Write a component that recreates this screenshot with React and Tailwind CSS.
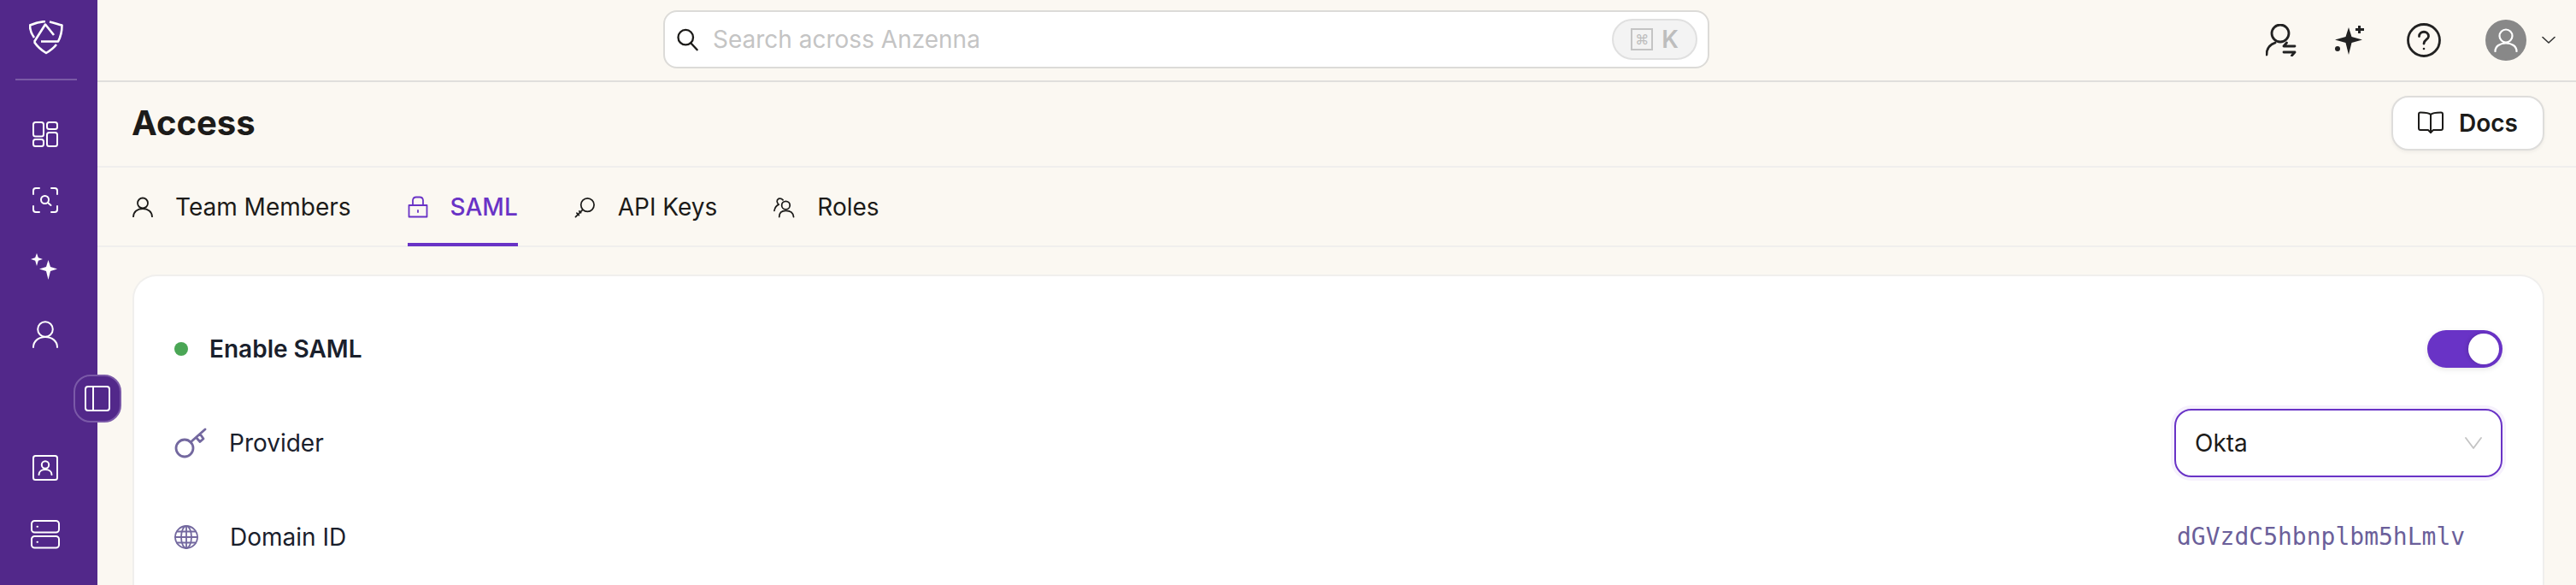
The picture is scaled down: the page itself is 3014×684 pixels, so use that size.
import React from 'react';

const Icon = ({ className, children, sw = 2, vb = '0 0 24 24' }) => (
  <svg viewBox={vb} fill="none" stroke="currentColor" strokeWidth={sw} strokeLinecap="round" strokeLinejoin="round" className={className}>
    {children}
  </svg>
);

const Logo = ({ className }) => (
  <svg viewBox="0 0 40 40" fill="none" stroke="currentColor" strokeWidth="2.6" strokeLinejoin="round" className={className}>
    <path d="M6 20 C3 16 1 11 1 5.500 C7 3 13 1.500 19 1" />
    <path d="M24 1.500 C29 2.500 33 4 38.500 5.500 C38.500 13 37 19 34 24.500 H14" />
    <path d="M6 25 L19 4.500 L29 17" />
    <path d="M6 25 C10 31 15 35 20 38 C25 35 29 32 32 28" />
  </svg>
);

const SparklesIcon = ({ className }) => (
  <svg viewBox="0 0 32 32" fill="currentColor" className={className}>
    <path d="M8 0 L9.800 5.200 L15 7 L9.800 8.800 L8 15 L6.200 8.800 L1 7 L6.200 5.200 Z" />
    <path d="M21.500 8 L24 16 L32 18.500 L24 21 L21.500 31 L19 21 L11 18.500 L19 16 Z" />
  </svg>
);

const navTop = [
  <Icon key="grid" className="w-[30px] h-[30px]" vb="0 0 30 30">
    <rect x="1" y="1" width="12" height="16.500" rx="2.500" />
    <rect x="17" y="1" width="12" height="8" rx="2.500" />
    <rect x="1" y="21" width="12" height="8" rx="2.500" />
    <rect x="17" y="13" width="12" height="16" rx="2.500" />
  </Icon>,
  <Icon key="scan" className="w-[30px] h-[30px]" vb="0 0 30 30">
    <path d="M1 8 V4 A3 3 0 0 1 4 1 H8" />
    <path d="M22 1 H26 A3 3 0 0 1 29 4 V8" />
    <path d="M29 22 V26 A3 3 0 0 1 26 29 H22" />
    <path d="M8 29 H4 A3 3 0 0 1 1 26 V22" />
    <circle cx="14.500" cy="14.500" r="4.500" />
    <path d="M18 18 L21.500 21" />
  </Icon>,
  <SparklesIcon key="spark" className="w-[32px] h-[32px] -ml-[4px]" />,
  <Icon key="user" className="w-[30px] h-[32px]" vb="0 0 30 32">
    <circle cx="15" cy="10" r="8.800" />
    <path d="M1 31 C1 24 7 19 15 19 C23 19 29 24 29 31" />
  </Icon>,
];

const tabs = [
  {
    label: 'Team Members',
    icon: (
      <Icon className="w-[24px] h-[24px]" sw={1.8}>
        <circle cx="12" cy="7.500" r="6" />
        <path d="M1 23.500 C1 17.500 6 14 12 14 C18 14 23 17.500 23 23.500" />
      </Icon>
    ),
  },
  {
    label: 'SAML',
    active: true,
    icon: (
      <Icon className="w-[24px] h-[26px]" sw={1.8} vb="0 0 24 26">
        <rect x="1.500" y="11" width="21" height="13.500" />
        <path d="M6 11 V5 A4 4 0 0 1 10 1.500 H14 A4 4 0 0 1 18 5 V11" />
        <path d="M12 17 V19" />
      </Icon>
    ),
  },
  {
    label: 'API Keys',
    icon: (
      <Icon className="w-[25px] h-[25px]" sw={1.8} vb="0 0 26 26">
        <circle cx="16" cy="10" r="8" />
        <path d="M10 16 L1.500 24.500" />
        <path d="M3 20 L5.500 22.500 M6 17.500 L8 19.500" />
      </Icon>
    ),
  },
  {
    label: 'Roles',
    icon: (
      <Icon className="w-[25px] h-[25px]" sw={1.8} vb="0 0 26 26">
        <circle cx="15" cy="10.500" r="5" />
        <path d="M7 24.500 C7 19.500 10 17 15 17 C20 17 24 19.500 24.500 24.500" />
        <path d="M11.500 4 A5 5 0 0 0 6 2.500 C3.500 4 4 8 6.500 9.500 C3 11 1.500 14 1 17" />
      </Icon>
    ),
  },
];

export default function App() {
  return (
    <div className="flex h-[684px] w-[3014px] overflow-hidden bg-[#fbf8f2] text-[#1c1b19] relative" style={{ fontFamily: 'Inter, sans-serif' }}>
      {/* Sidebar */}
      <aside className="w-[114px] shrink-0 bg-[#52288a] text-white flex flex-col items-center">
        <div className="h-[92px] w-full flex items-start justify-center pt-[24px] pr-[6px]">
          <Logo className="w-[40px] h-[40px]" />
        </div>
        <div className="w-[72px] h-[2px] bg-[#7a5aa6] -ml-[6px]" />
        <nav className="mt-[48px] flex flex-col items-center gap-[47px] -ml-[8px]">
          {navTop}
        </nav>
        <div className="mt-[125px] flex flex-col items-center gap-[46px] -ml-[8px]">
          <Icon className="w-[30px] h-[30px]" vb="0 0 30 30">
            <rect x="1" y="1" width="28" height="28" rx="2.500" />
            <circle cx="15" cy="11.500" r="4.200" />
            <path d="M7.500 23 C7.500 19 11 17 15 17 C19 17 22.500 19 22.500 23" />
          </Icon>
          <Icon className="w-[34px] h-[34px]" vb="0 0 34 34">
            <rect x="1" y="1" width="32" height="13.500" rx="3.500" />
            <rect x="1" y="19" width="32" height="13.500" rx="3.500" />
            <path d="M7.500 7.700 H8 M7.500 25.700 H8" strokeWidth="2" />
          </Icon>
        </div>
      </aside>

      {/* Collapse toggle */}
      <button className="absolute left-[86px] top-[438px] w-[56px] h-[56px] rounded-[20px] bg-[#52288a] border-2 border-[#7b5aa8] text-white flex items-center justify-center">
        <Icon className="w-[30px] h-[30px]" vb="0 0 30 30">
          <rect x="1" y="1" width="28" height="28" rx="3" />
          <path d="M10 1 V29" />
        </Icon>
      </button>

      <main className="flex-1 min-w-0 flex flex-col">
        {/* Top bar */}
        <header className="h-[96px] shrink-0 border-b-2 border-[#e0dfdc] relative flex items-center">
          <div className="ml-[662px] w-[1224px] h-[68px] -mt-[2px] rounded-[16px] border-2 border-[#dcdbd8] bg-white flex items-center pl-[12px] pr-[12px]">
            <Icon className="w-[28px] h-[28px] shrink-0" sw={2}>
              <circle cx="10.500" cy="10" r="7.500" />
              <path d="M16 16 L22 22.500" />
            </Icon>
            <span className="ml-[16px] text-[28px] text-[#c4c4c4]">Search across Anzenna</span>
            <div className="ml-auto w-[100px] h-[48px] rounded-full bg-[#f3f3f3] border-2 border-[#e0e0e0] flex items-center justify-center gap-[10px] text-[#bdbdbd]">
              <span className="w-[26px] h-[26px] border-2 border-[#c4c4c4] flex items-center justify-center text-[16px] leading-none">⌘</span>
              <span className="text-[28px] font-semibold leading-none">K</span>
            </div>
          </div>
          <div className="ml-auto flex items-center mr-[24px]">
            <Icon className="w-[36px] h-[38px] text-[#222]" sw={2.8} vb="0 0 36 38">
              <circle cx="17" cy="11" r="10" />
              <path d="M1 36 C1 29 5 24 11 22" />
              <path d="M21 26 H34 M24.500 22 L21 26 M21 33 H34 M30.500 37 L34 33" />
            </Icon>
            <svg viewBox="0 0 36 36" fill="currentColor" className="ml-[44px] w-[36px] h-[36px] text-[#222]">
              <path d="M17 3 L20.500 14 L33 17.500 L20.500 21 L17 35 L13.500 21 L1 17.500 L13.500 14 Z" />
              <path d="M28 1 H31 V4 H35 V7 H31 V10 H28 V7 H25 V4 H28 Z" />
              <circle cx="4" cy="28" r="3" />
            </svg>
            <Icon className="ml-[49px] w-[40px] h-[40px] text-[#222]" sw={2.8} vb="0 0 40 40">
              <circle cx="20" cy="20" r="18.500" />
              <path d="M14.500 15.500 C14.500 8.500 25.500 8.500 25.500 15.500 C25.500 19 20 19.500 20 24" />
              <circle cx="20" cy="30" r="1.300" fill="currentColor" stroke="none" />
            </Icon>
            <div className="ml-[52px] w-[48px] h-[48px] rounded-full bg-[#888888] flex items-center justify-center text-white">
              <Icon className="w-[28px] h-[28px]" sw={2.2} vb="0 0 28 28">
                <circle cx="14" cy="9" r="7.500" />
                <path d="M1.500 27 C1.500 21 7 17.500 14 17.500 C21 17.500 26.500 21 26.500 27" />
              </Icon>
            </div>
            <Icon className="ml-[18px] w-[16px] h-[10px] text-[#333]" sw={1.6} vb="0 0 16 10">
              <path d="M1 1.500 L8 8 L15 1.500" />
            </Icon>
          </div>
        </header>

        {/* Page title */}
        <div className="h-[100px] shrink-0 border-b-2 border-[#f0efed] flex items-center justify-between pl-[40px] pr-[37px]">
          <h1 className="text-[40px] font-bold -mt-[2px]">Access</h1>
          <button className="w-[179px] h-[64px] -mt-[2px] rounded-[20px] border-2 border-[#dedddb] bg-white shadow-[0_2px_4px_rgba(0,0,0,0.05)] flex items-center justify-center gap-[18px] text-[28px] font-semibold">
            <Icon className="w-[30px] h-[28px]" sw={2} vb="0 0 30 28">
              <path d="M15 4 C13 2 10 1.500 3 1.500 C1.800 1.500 1 2.300 1 3.500 V20 C1 21.300 1.800 22 3 22 H12 L15 25 L18 22 H27 C28.200 22 29 21.300 29 20 V3.500 C29 2.300 28.200 1.500 27 1.500 C20 1.500 17 2 15 4 Z" />
              <path d="M15 4 V25" />
            </Icon>
            Docs
          </button>
        </div>

        {/* Tabs */}
        <div className="h-[93px] shrink-0 border-b-2 border-[#f0efed] flex items-stretch pl-[41px] gap-[66px]">
          {tabs.map((t) => (
            <div key={t.label} className={`flex items-center gap-[26px] h-[92px] border-b-4 pt-[4px] text-[28px] ${t.active ? 'border-[#6933c6] text-[#6933c6] font-medium' : 'border-transparent'}`}>
              {t.icon}
              {t.label}
            </div>
          ))}
        </div>

        {/* SAML card */}
        <section className="mt-[32px] ml-[41px] mr-[37px] flex-1 rounded-t-[28px] border-2 border-b-0 border-[#f0efed] bg-white pl-[47px] pr-[47px] pt-[25px] text-[#1a202c]">
          <div className="h-[120px] flex items-center justify-between">
            <div className="flex items-center gap-[25px]">
              <span className="w-[16px] h-[16px] rounded-full bg-[#4aa655]" />
              <span className="text-[28px] font-semibold">Enable SAML</span>
            </div>
            <div className="w-[88px] h-[44px] rounded-full bg-[#6933c6] flex items-center justify-end pr-[4px] shadow-[0_2px_6px_rgba(0,0,0,0.1)]">
              <span className="w-[36px] h-[36px] rounded-full bg-white shadow-[-2px_0_4px_rgba(0,0,0,0.12)]" />
            </div>
          </div>
          <div className="h-[100px] flex items-center justify-between">
            <div className="flex items-center">
              <Icon className="w-[38px] h-[36px] text-[#73689f]" sw={2.8} vb="0 0 38 36">
                <circle cx="12" cy="24" r="10" />
                <path d="M19 17 L36 2 M25.500 11.500 L30 16.500 L34 13 L30.500 8" />
              </Icon>
              <span className="ml-[26px] text-[28px]">Provider</span>
            </div>
            <div className="w-[384px] h-[80px] rounded-[20px] border-2 border-[#6933c6] shadow-[0_0_0_4px_#f6f1fc] flex items-center justify-between pl-[22px] pr-[22px] text-[#1c1b19]">
              <span className="text-[28px]">Okta</span>
              <Icon className="w-[20px] h-[14px] text-[#c4c4c4]" sw={1.8} vb="0 0 20 14">
                <path d="M1 1 L10 13 L19 1" />
              </Icon>
            </div>
          </div>
          <div className="h-[120px] flex items-center justify-between">
            <div className="flex items-center">
              <Icon className="w-[28px] h-[28px] text-[#73689f]" sw={1.8} vb="0 0 28 28">
                <circle cx="14" cy="14" r="13" />
                <ellipse cx="14" cy="14" rx="6" ry="13" />
                <path d="M14 1 V27 M1 14 H27 M3 7.500 H25 M3 20.500 H25" />
              </Icon>
              <span className="ml-[37px] text-[28px]">Domain ID</span>
            </div>
            <span className="w-[384px] pl-[3px] text-[28px] text-[#6b5f9a]" style={{ fontFamily: '"DejaVu Sans Mono", monospace' }}>dGVzdC5hbnplbm5hLmlv</span>
          </div>
        </section>
      </main>
    </div>
  );
}
